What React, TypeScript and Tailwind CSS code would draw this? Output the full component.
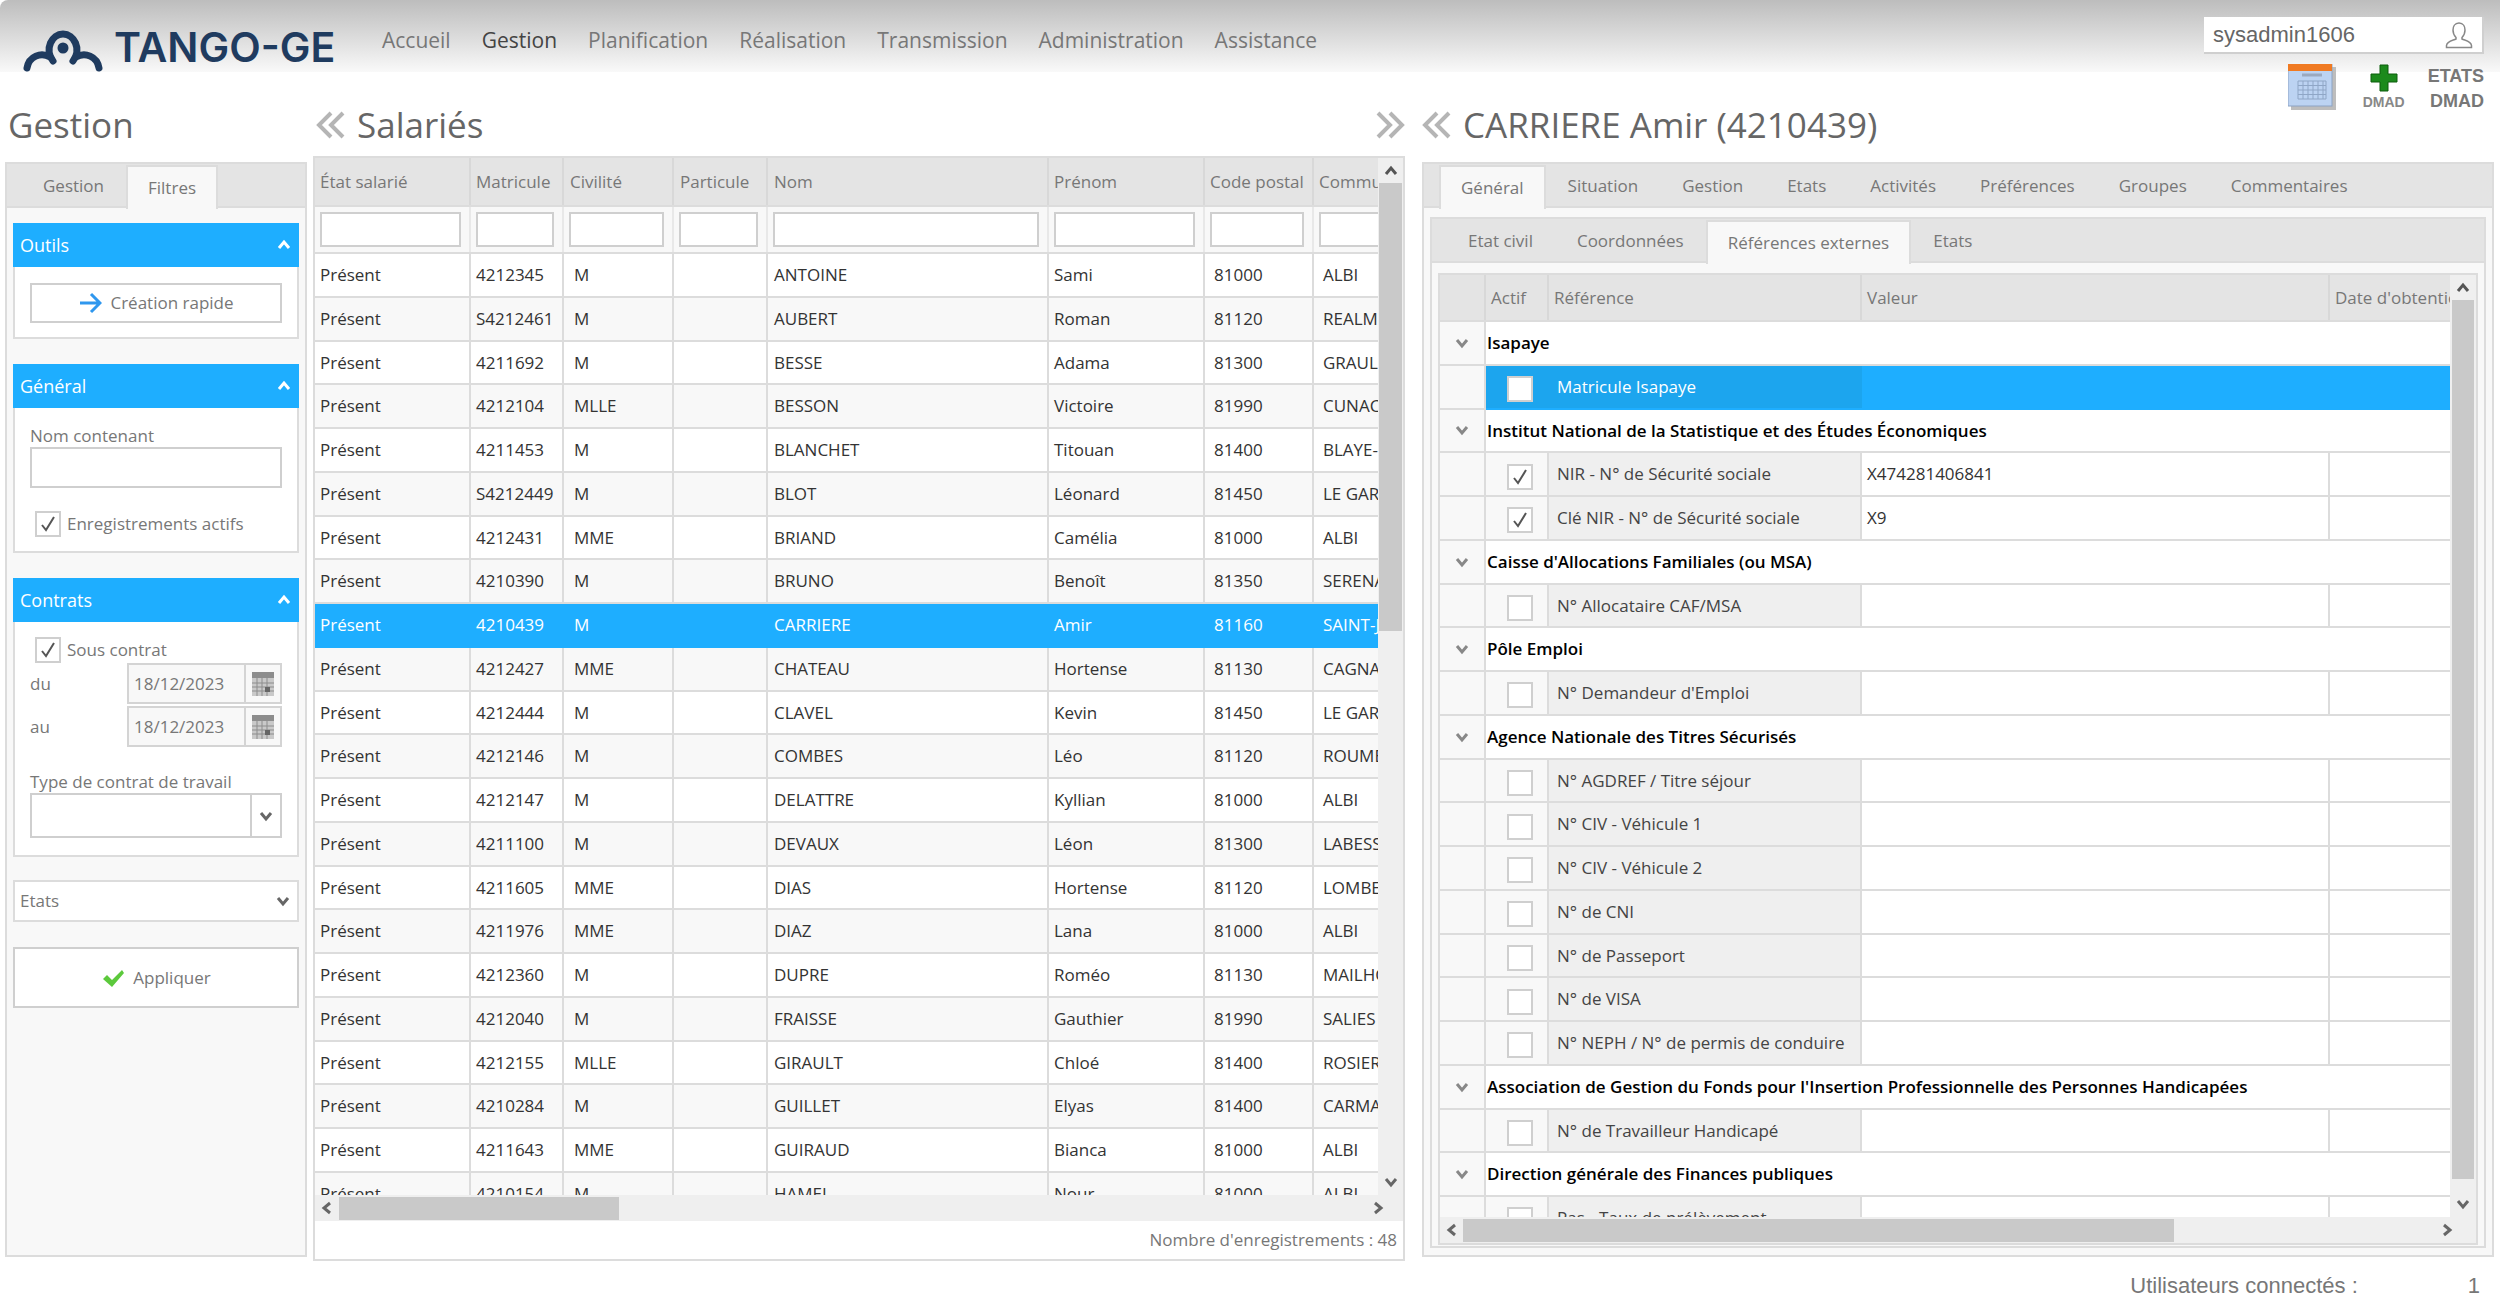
import React from 'react';

const nav = ['Accueil', 'Gestion', 'Planification', 'Réalisation', 'Transmission', 'Administration', 'Assistance'];

const columns = [
    { name: 'État salarié', w: 'w-[156px]', head: 'pl-[5px]', cell: 'pl-[5px]' },
    { name: 'Matricule', w: 'w-[93px]', head: 'pl-[5px]', cell: 'pl-[5px]' },
    { name: 'Civilité', w: 'w-[110px]', head: 'pl-[6px]', cell: 'pl-[10px]' },
    { name: 'Particule', w: 'w-[94px]', head: 'pl-[6px]', cell: 'pl-[6px]' },
    { name: 'Nom', w: 'w-[281px]', head: 'pl-[6px]', cell: 'pl-[6px]' },
    { name: 'Prénom', w: 'w-[156px]', head: 'pl-[5px]', cell: 'pl-[5px]' },
    { name: 'Code postal', w: 'w-[109px]', head: 'pl-[5px]', cell: 'pl-[9px]' },
    { name: 'Commune', w: 'w-[64px]', head: 'pl-[5px]', cell: 'pl-[9px]' },
];

const salaries = [
    ['4212345', 'M', 'ANTOINE', 'Sami', '81000', 'ALBI'],
    ['S4212461', 'M', 'AUBERT', 'Roman', '81120', 'REALMONT'],
    ['4211692', 'M', 'BESSE', 'Adama', '81300', 'GRAULHET'],
    ['4212104', 'MLLE', 'BESSON', 'Victoire', '81990', 'CUNAC'],
    ['4211453', 'M', 'BLANCHET', 'Titouan', '81400', 'BLAYE-LES-MINES'],
    ['S4212449', 'M', 'BLOT', 'Léonard', '81450', 'LE GARRIC'],
    ['4212431', 'MME', 'BRIAND', 'Camélia', '81000', 'ALBI'],
    ['4210390', 'M', 'BRUNO', 'Benoît', '81350', 'SERENAC'],
    ['4210439', 'M', 'CARRIERE', 'Amir', '81160', 'SAINT-JUERY'],
    ['4212427', 'MME', 'CHATEAU', 'Hortense', '81130', 'CAGNAC-LES-MINES'],
    ['4212444', 'M', 'CLAVEL', 'Kevin', '81450', 'LE GARRIC'],
    ['4212146', 'M', 'COMBES', 'Léo', '81120', 'ROUMEGOUX'],
    ['4212147', 'M', 'DELATTRE', 'Kyllian', '81000', 'ALBI'],
    ['4211100', 'M', 'DEVAUX', 'Léon', '81300', 'LABESSIERE'],
    ['4211605', 'MME', 'DIAS', 'Hortense', '81120', 'LOMBERS'],
    ['4211976', 'MME', 'DIAZ', 'Lana', '81000', 'ALBI'],
    ['4212360', 'M', 'DUPRE', 'Roméo', '81130', 'MAILHOC'],
    ['4212040', 'M', 'FRAISSE', 'Gauthier', '81990', 'SALIES'],
    ['4212155', 'MLLE', 'GIRAULT', 'Chloé', '81400', 'ROSIERES'],
    ['4210284', 'M', 'GUILLET', 'Elyas', '81400', 'CARMAUX'],
    ['4211643', 'MME', 'GUIRAUD', 'Bianca', '81000', 'ALBI'],
    ['4210154', 'M', 'HAMEL', 'Nour', '81000', 'ALBI'],
];

type RefRow = { group?: string; label?: string; value?: string; checked?: boolean; selected?: boolean };

const references: RefRow[] = [
    { group: 'Isapaye' },
    { label: 'Matricule Isapaye', selected: true },
    { group: 'Institut National de la Statistique et des Études Économiques' },
    { label: 'NIR - N° de Sécurité sociale', value: 'X474281406841', checked: true },
    { label: 'Clé NIR - N° de Sécurité sociale', value: 'X9', checked: true },
    { group: "Caisse d'Allocations Familiales (ou MSA)" },
    { label: 'N° Allocataire CAF/MSA' },
    { group: 'Pôle Emploi' },
    { label: "N° Demandeur d'Emploi" },
    { group: 'Agence Nationale des Titres Sécurisés' },
    { label: 'N° AGDREF / Titre séjour' },
    { label: 'N° CIV - Véhicule 1' },
    { label: 'N° CIV - Véhicule 2' },
    { label: 'N° de CNI' },
    { label: 'N° de Passeport' },
    { label: 'N° de VISA' },
    { label: 'N° NEPH / N° de permis de conduire' },
    { group: "Association de Gestion du Fonds pour l'Insertion Professionnelle des Personnes Handicapées" },
    { label: 'N° de Travailleur Handicapé' },
    { group: 'Direction générale des Finances publiques' },
    { label: 'Pas - Taux de prélèvement' },
];

function Chevron({ dir, color = '#777', size = 14 }: { dir: 'up' | 'down' | 'left' | 'right'; color?: string; size?: number }) {
    const points = {
        up: '2,10 7,4 12,10',
        down: '2,4 7,10 12,4',
        left: '10,2 4,7 10,12',
        right: '4,2 10,7 4,12',
    }[dir];
    return (
        <svg width={size} height={size} viewBox="0 0 14 14" className="shrink-0">
            <polyline points={points} fill="none" stroke={color} strokeWidth="3" />
        </svg>
    );
}

function DoubleChevron({ right = false }: { right?: boolean }) {
    return (
        <svg width="30" height="28" viewBox="0 0 30 28" className="shrink-0">
            <g fill="none" stroke="#b5b5b5" strokeWidth="4" transform={right ? 'matrix(-1 0 0 1 30 0)' : undefined}>
                <polyline points="15,2 3,14 15,26" />
                <polyline points="27,2 15,14 27,26" />
            </g>
        </svg>
    );
}

function Checkbox({ checked = false, className = '' }: { checked?: boolean; className?: string }) {
    return (
        <span className={`flex h-[26px] w-[26px] shrink-0 items-center justify-center border-2 border-[#cfcfcf] bg-white ${className}`}>
            {checked && (
                <svg width="18" height="18" viewBox="0 0 18 18">
                    <path d="M3 10 L7 15 L15 2" fill="none" stroke="#555" strokeWidth="2" />
                </svg>
            )}
        </span>
    );
}

function CalendarMini() {
    return (
        <svg width="22" height="24" viewBox="0 0 22 24">
            <rect width="22" height="24" fill="#8d8d8d" />
            <rect y="6" width="22" height="18" fill="#c9c9c9" />
            <path d="M0 11h22M0 15h22M0 19h22M5 6v18M10 6v18M15 6v18" stroke="#8d8d8d" strokeWidth="1" />
            <rect x="13" y="15" width="5" height="5" fill="#666" />
        </svg>
    );
}

function Tab({ label, active = false }: { label: string; active?: boolean }) {
    return (
        <div
            className={
                active
                    ? 'relative -mb-[3px] flex h-[44px] items-center border-2 border-b-0 border-[#dcdcdc] bg-[#f8f8f8] px-[20px] text-[17px] text-[#777]'
                    : 'flex h-[40px] items-center px-[22px] text-[17px] text-[#777]'
            }
        >
            {label}
        </div>
    );
}

function SectionHeader({ title }: { title: string }) {
    return (
        <div className="flex h-[44px] items-center justify-between bg-[#1eaeff] pl-[7px] pr-[8px] text-[18px] text-white">
            {title}
            <Chevron dir="up" color="#ffffff" />
        </div>
    );
}

function Header() {
    return (
        <header className="flex h-[72px] shrink-0 rounded-tl-lg bg-gradient-to-b from-[#bdbdbd] to-[#f9f9f9]">
            <div className="flex w-[382px] shrink-0 items-end gap-[10px] pl-[22px]">
                <svg width="82" height="42" viewBox="0 0 82 42">
                    <g fill="none" stroke="#1f3b5f" strokeWidth="7" strokeLinecap="round">
                        <path d="M5 38 C7 26 19 22 28 27" />
                        <path d="M77 38 C75 26 63 22 54 27" />
                        <path d="M31 31 C22 19 30 4 41 4 C52 4 60 19 51 31" />
                    </g>
                    <circle cx="41" cy="18" r="5.5" fill="#1f3b5f" />
                </svg>
                <span className="mb-[2px] font-['Inter',sans-serif] text-[41px] leading-[46px] font-semibold text-[#1f3b5f]">TANGO-GE</span>
            </div>
            <nav className="flex h-[82px] items-center gap-[31px] text-[21px] text-[#777]">
                {nav.map((item) => (
                    <span key={item} className={item === 'Gestion' ? 'text-[#444]' : ''}>
                        {item}
                    </span>
                ))}
            </nav>
            <div className="ml-auto flex w-[280px] flex-col pt-[17px] mr-[16px] font-['Liberation_Sans',sans-serif]">
                <div className="flex h-[37px] shrink-0 items-center justify-between border-2 border-t-0 border-l-0 border-[#cfcfcf] bg-white pl-[9px] pr-[8px] text-[22px] text-[#666]">
                    sysadmin1606
                    <svg width="30" height="30" viewBox="0 0 30 30">
                        <path d="M15 3 C10.5 3 9 7 9 10 C9 13 10.5 16 12 17.5 L12 19 C9 20.5 3 21 2.5 25.5 L2.5 27.5 L27.5 27.5 L27.5 25.5 C27 21 21 20.5 18 19 L18 17.5 C19.5 16 21 13 21 10 C21 7 19.5 3 15 3 Z" fill="none" stroke="#888" strokeWidth="1.5" />
                    </svg>
                </div>
                <div className="relative z-10 mt-[10px] flex items-start justify-end">
                    <svg width="48" height="46" viewBox="0 0 48 46" className="mr-[26px]">
                        <rect x="3" y="3" width="45" height="43" fill="#bdbdbd" />
                        <rect width="44" height="42" fill="#bcd3f2" stroke="#8da3c4" />
                        <rect width="44" height="7" fill="#f07a22" />
                        <path d="M10 17h28v18H10z M10 21.5h28M10 26h28M10 30.5h28M15 17v18M20 17v18M25 17v18M30 17v18M35 17v18" fill="none" stroke="#8fa6c6" />
                        <path d="M14 11h20" stroke="#9aa9c0" strokeWidth="3" />
                    </svg>
                    <div className="mr-[22px] flex w-[44px] flex-col items-center">
                        <svg width="28" height="28" viewBox="0 0 28 28">
                            <path d="M10 1h8v9h9v8h-9v9h-8v-9H1v-8h9z" fill="#1c8a1c" stroke="#0d5c0d" strokeWidth="1" />
                        </svg>
                        <span className="mt-[1px] text-[14px] font-bold leading-[18px] text-[#888]">DMAD</span>
                    </div>
                    <div className="flex flex-col items-end text-[18px] font-bold leading-[25px] text-[#777]">
                        <span>ETATS</span>
                        <span>DMAD</span>
                    </div>
                </div>
            </div>
        </header>
    );
}

function LeftColumn() {
    return (
        <div className="ml-[5px] flex w-[302px] shrink-0 flex-col">
            <div className="flex h-[90px] shrink-0 items-center pl-[3px] pt-[16px] text-[35px] font-medium text-[#666]">Gestion</div>
            <section className="flex h-[1095px] flex-col border-2 border-[#dcdcdc] bg-[#f8f8f8] text-[17px] text-[#777]">
                <div className="flex h-[44px] shrink-0 items-end border-b-2 border-[#dcdcdc] bg-[#e4e4e4] pl-[14px]">
                    <Tab label="Gestion" />
                    <Tab label="Filtres" active />
                </div>
                <div className="flex flex-col px-[6px] pt-[15px]">
                    <SectionHeader title="Outils" />
                    <div className="h-[72px] border-2 border-t-0 border-[#dcdcdc] bg-white px-[15px] pt-[16px]">
                        <button className="flex h-[40px] w-full items-center justify-center gap-[8px] border-2 border-[#cfcfcf] bg-white text-[#777]">
                            <svg width="24" height="24" viewBox="0 0 24 24">
                                <path d="M2 12h18M13 3l9 9-9 9" fill="none" stroke="#2f97ee" strokeWidth="3" />
                            </svg>
                            Création rapide
                        </button>
                    </div>

                    <div className="mt-[25px]">
                        <SectionHeader title="Général" />
                        <div className="h-[145px] border-2 border-t-0 border-[#dcdcdc] bg-white px-[15px] pt-[16px]">
                            <div className="h-[23px] leading-[23px]">Nom contenant</div>
                            <input className="block h-[41px] w-full border-2 border-[#cfcfcf] bg-white" />
                            <label className="mt-[23px] flex items-center gap-[6px] pl-[5px]">
                                <Checkbox checked />
                                Enregistrements actifs
                            </label>
                        </div>
                    </div>

                    <div className="mt-[25px]">
                        <SectionHeader title="Contrats" />
                        <div className="h-[235px] border-2 border-t-0 border-[#dcdcdc] bg-white px-[15px] pt-[15px]">
                            <label className="flex items-center gap-[6px] pl-[5px]">
                                <Checkbox checked />
                                Sous contrat
                            </label>
                            {['du', 'au'].map((label) => (
                                <div key={label} className="mb-[2px] flex h-[41px] items-center justify-between">
                                    {label}
                                    <div className="flex h-[41px] w-[155px] items-center border-2 border-[#d4d4d4] bg-[#f8f8f8] pl-[5px] pr-[5px]">
                                        <span className="flex-1">18/12/2023</span>
                                        <span className="mr-[1px] flex h-full items-center border-l-2 border-[#d4d4d4] pl-[6px]">
                                            <CalendarMini />
                                        </span>
                                    </div>
                                </div>
                            ))}
                            <div className="mt-[23px] h-[23px] leading-[23px]">Type de contrat de travail</div>
                            <div className="flex h-[45px] border-2 border-[#cfcfcf] bg-white">
                                <div className="flex-1 border-r-2 border-[#cfcfcf]" />
                                <div className="flex w-[28px] items-center justify-center">
                                    <Chevron dir="down" color="#666" />
                                </div>
                            </div>
                        </div>
                    </div>

                    <div className="mt-[23px] flex h-[42px] items-center justify-between border-2 border-[#dcdcdc] bg-white pl-[5px] pr-[7px]">
                        Etats
                        <Chevron dir="down" color="#666" />
                    </div>

                    <button className="mt-[25px] flex h-[61px] w-full items-center justify-center gap-[8px] border-2 border-[#cfcfcf] bg-white text-[#777]">
                        <svg width="24" height="24" viewBox="0 0 24 24">
                            <path d="M2 13l4-4 5 5L21 4l2 3-12 14z" fill="#5cc93c" />
                        </svg>
                        Appliquer
                    </button>
                </div>
            </section>
        </div>
    );
}

function MiddleColumn() {
    return (
        <div className="ml-[6px] flex w-[1092px] shrink-0 flex-col">
            <div className="flex h-[84px] shrink-0 items-center justify-between pl-[3px] pt-[22px] text-[35px] font-medium text-[#666]">
                <div className="flex items-center gap-[11px]">
                    <DoubleChevron />
                    Salariés
                </div>
                <DoubleChevron right />
            </div>
            <section className="flex h-[1105px] flex-col border-2 border-[#dcdcdc] bg-white text-[17px]">
                <div className="flex min-h-0 flex-1">
                    <div className="flex w-[1063px] flex-col overflow-hidden">
                        <div className="flex h-[47px] shrink-0 bg-[#e4e4e4] text-[#777]">
                            {columns.map((col, i) => (
                                <div key={col.name} className={`${col.w} ${col.head} flex shrink-0 items-center overflow-hidden whitespace-nowrap ${i < 7 ? 'border-r-2 border-[#d8d8d8]' : ''}`}>
                                    {col.name}
                                </div>
                            ))}
                        </div>
                        <div className="flex h-[49px] shrink-0 border-y-2 border-[#dcdcdc] bg-[#f8f8f8]">
                            {columns.map((col, i) => (
                                <div key={col.name} className={`${col.w} flex shrink-0 items-center overflow-hidden pl-[5px] pr-[8px] ${i < 7 ? 'border-r-2 border-[#e8e8e8]' : ''}`}>
                                    <input className={`h-[35px] border-2 border-[#cfcfcf] bg-white ${i === 7 ? 'w-[100px] shrink-0' : 'w-full'}`} />
                                </div>
                            ))}
                        </div>
                        <div className="min-h-0 flex-1 overflow-hidden">
                            {salaries.map((s, r) => {
                                const selected = s[0] === '4210439';
                                const cells = ['Présent', ...s.slice(0, 2), '', ...s.slice(2)];
                                return (
                                    <div
                                        key={s[0]}
                                        className={`flex h-[43.75px] border-b-2 ${
                                            selected
                                                ? 'border-[#1eaeff] bg-[#1eaeff] text-white'
                                                : `border-[#dcdcdc] text-[#333] ${r % 2 === 0 ? 'bg-white' : 'bg-[#f8f8f8]'}`
                                        }`}
                                    >
                                        {cells.map((cell, i) => (
                                            <div
                                                key={i}
                                                className={`${columns[i].w} ${columns[i].cell} flex shrink-0 items-center overflow-hidden whitespace-nowrap ${
                                                    i < 7 ? (selected ? 'border-r-2 border-[#1eaeff]' : 'border-r-2 border-[#dcdcdc]') : ''
                                                }`}
                                            >
                                                {cell}
                                            </div>
                                        ))}
                                    </div>
                                );
                            })}
                        </div>
                    </div>
                    <div className="flex w-[25px] shrink-0 flex-col items-center bg-[#efefef]">
                        <div className="flex h-[25px] w-full shrink-0 items-center justify-center">
                            <Chevron dir="up" color="#555" />
                        </div>
                        <div className="h-[448px] w-[23px] shrink-0 bg-[#c9c9c9]" />
                        <div className="mt-auto flex h-[26px] w-full shrink-0 items-center justify-center">
                            <Chevron dir="down" color="#666" />
                        </div>
                    </div>
                </div>
                <div className="flex h-[26px] shrink-0 items-center bg-[#efefef]">
                    <div className="flex w-[24px] shrink-0 justify-center">
                        <Chevron dir="left" color="#666" />
                    </div>
                    <div className="h-[23px] w-[280px] bg-[#c9c9c9]" />
                    <div className="ml-auto flex w-[50px] justify-center">
                        <Chevron dir="right" color="#666" />
                    </div>
                </div>
                <div className="flex h-[38px] shrink-0 items-center justify-end pr-[6px] text-[17px] text-[#777]">Nombre d'enregistrements : 48</div>
            </section>
        </div>
    );
}

function RightColumn() {
    return (
        <div className="ml-[17px] flex w-[1072px] shrink-0 flex-col">
            <div className="flex h-[90px] shrink-0 items-center gap-[11px] pt-[16px] text-[35px] font-medium text-[#666]">
                <DoubleChevron />
                CARRIERE Amir (4210439)
            </div>
            <section className="flex h-[1095px] flex-col border-2 border-[#dcdcdc] bg-[#f8f8f8] text-[17px]">
                <div className="flex h-[44px] shrink-0 items-end border-b-2 border-[#dcdcdc] bg-[#e4e4e4] pl-[15px]">
                    <Tab label="Général" active />
                    {['Situation', 'Gestion', 'Etats', 'Activités', 'Préférences', 'Groupes', 'Commentaires'].map((t) => (
                        <Tab key={t} label={t} />
                    ))}
                </div>
                <div className="mx-[6px] mt-[9px] flex min-h-0 flex-1 flex-col border-2 border-[#dcdcdc] bg-[#f8f8f8] mb-[7px]">
                    <div className="flex h-[44px] shrink-0 items-end border-b-2 border-[#dcdcdc] bg-[#e4e4e4] pl-[14px]">
                        <Tab label="Etat civil" />
                        <Tab label="Coordonnées" />
                        <Tab label="Références externes" active />
                        <Tab label="Etats" />
                    </div>
                    <div className="mx-[6px] mb-[1px] mt-[10px] flex min-h-0 flex-1 flex-col border-2 border-[#dcdcdc] bg-white">
                        <div className="flex min-h-0 flex-1">
                            <div className="flex w-[1012px] flex-col overflow-hidden">
                                <div className="flex h-[47px] shrink-0 border-b-2 border-[#dcdcdc] bg-[#e4e4e4] text-[#777]">
                                    <div className="w-[46px] shrink-0 border-r-2 border-[#d8d8d8]" />
                                    <div className="flex w-[63px] shrink-0 items-center border-r-2 border-[#d8d8d8] pl-[5px]">Actif</div>
                                    <div className="flex w-[313px] shrink-0 items-center border-r-2 border-[#d8d8d8] pl-[5px]">Référence</div>
                                    <div className="flex w-[468px] shrink-0 items-center border-r-2 border-[#d8d8d8] pl-[5px]">Valeur</div>
                                    <div className="flex w-[122px] shrink-0 items-center overflow-hidden whitespace-nowrap pl-[5px]">Date d'obtention</div>
                                </div>
                                <div className="min-h-0 flex-1 overflow-hidden">
                                    {references.map((row, i) =>
                                        row.group ? (
                                            <div key={i} className="flex h-[43.75px] border-b-2 border-[#dcdcdc] bg-white">
                                                <div className="flex w-[46px] shrink-0 items-center justify-center border-r-2 border-[#dcdcdc] bg-[#f8f8f8]">
                                                    <Chevron dir="down" color="#888" />
                                                </div>
                                                <div className="flex items-center whitespace-nowrap pl-[1px] font-semibold text-black">{row.group}</div>
                                            </div>
                                        ) : (
                                            <div key={i} className="flex h-[43.75px] border-[#dcdcdc]">
                                                <div className="w-[46px] shrink-0 border-b-2 border-r-2 border-[#dcdcdc] bg-[#f8f8f8]" />
                                                <div
                                                    className={`flex w-[63px] shrink-0 items-center border-b-2 pl-[21px] ${
                                                        row.selected ? 'border-[#1eaeff] bg-[#1ca5ee]' : 'border-[#dcdcdc] bg-[#f8f8f8] border-r-2'
                                                    }`}
                                                >
                                                    <Checkbox checked={row.checked} className="mt-[5px]" />
                                                </div>
                                                <div
                                                    className={`flex w-[313px] shrink-0 items-center overflow-hidden whitespace-nowrap border-b-2 pl-[8px] ${
                                                        row.selected ? 'border-[#1eaeff] bg-[#1ca5ee] text-white' : 'border-r-2 border-[#dcdcdc] bg-[#efefef] text-[#444]'
                                                    }`}
                                                >
                                                    {row.label}
                                                </div>
                                                <div
                                                    className={`flex w-[468px] shrink-0 items-center border-b-2 pl-[5px] text-[#333] ${
                                                        row.selected ? 'border-[#1eaeff] bg-[#1eaeff]' : 'border-r-2 border-[#dcdcdc] bg-white'
                                                    }`}
                                                >
                                                    {row.value}
                                                </div>
                                                <div className={`w-[122px] shrink-0 border-b-2 ${row.selected ? 'border-[#1eaeff] bg-[#1eaeff]' : 'border-[#dcdcdc] bg-white'}`} />
                                            </div>
                                        ),
                                    )}
                                </div>
                            </div>
                            <div className="flex w-[26px] shrink-0 flex-col items-center bg-[#efefef]">
                                <div className="flex h-[25px] w-full shrink-0 items-center justify-center">
                                    <Chevron dir="up" color="#555" />
                                </div>
                                <div className="h-[879px] w-[22px] shrink-0 bg-[#c9c9c9]" />
                                <div className="mt-auto flex h-[26px] w-full shrink-0 items-center justify-center">
                                    <Chevron dir="down" color="#666" />
                                </div>
                            </div>
                        </div>
                        <div className="flex h-[26px] shrink-0 items-center bg-[#efefef]">
                            <div className="flex w-[23px] shrink-0 justify-center">
                                <Chevron dir="left" color="#666" />
                            </div>
                            <div className="h-[23px] w-[711px] bg-[#c9c9c9]" />
                            <div className="ml-auto flex w-[58px] justify-center">
                                <Chevron dir="right" color="#666" />
                            </div>
                        </div>
                    </div>
                </div>
            </section>
        </div>
    );
}

export default function App() {
    return (
        <div className="flex h-[1309px] w-[2500px] flex-col overflow-hidden bg-white font-['Open_Sans',sans-serif]">
            <Header />
            <div className="flex h-[1189px] shrink-0">
                <LeftColumn />
                <MiddleColumn />
                <RightColumn />
            </div>
            <footer className="flex flex-1 items-center justify-end pr-[20px] font-['Liberation_Sans',sans-serif] text-[22px] text-[#777]">
                <span>Utilisateurs connectés :</span>
                <span className="ml-[110px]">1</span>
            </footer>
        </div>
    );
}
